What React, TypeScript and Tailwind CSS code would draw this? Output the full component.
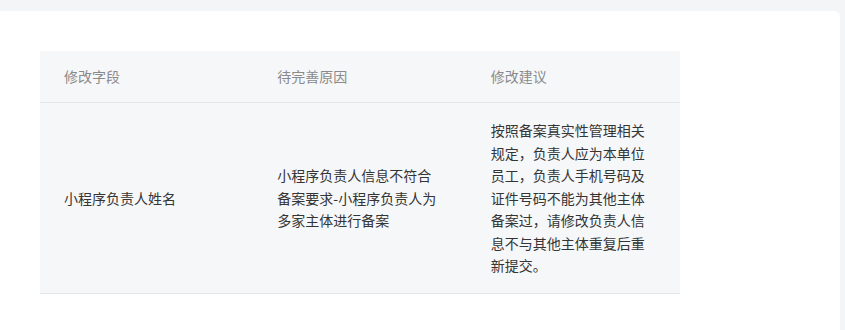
export default function App() {
  const rows = [
    {
      field: "小程序负责人姓名",
      reason: "小程序负责人信息不符合备案要求-小程序负责人为多家主体进行备案",
      advice:
        "按照备案真实性管理相关规定，负责人应为本单位员工，负责人手机号码及证件号码不能为其他主体备案过，请修改负责人信息不与其他主体重复后重新提交。",
    },
  ];

  return (
    <div
      className="min-h-[330px] w-[845px] bg-[#f4f5f7] pt-[11px] pr-[5px]"
      style={{ fontFamily: '"Noto Sans CJK SC", "Noto Sans", sans-serif' }}
    >
      <div className="min-h-[319px] rounded-tr-md bg-white pl-10 pt-10">
        <div className="w-[640px] bg-[#f6f7f9] text-[14px]">
          <div className="grid h-[52px] grid-cols-3 items-center border-b border-[#e4e5e7] text-[#8a8a8a]">
            <div className="px-6">修改字段</div>
            <div className="px-6">待完善原因</div>
            <div className="px-6">修改建议</div>
          </div>
          {rows.map((r) => (
            <div
              key={r.field}
              className="grid grid-cols-3 items-center border-b border-[#e4e5e7] py-4 leading-[22.5px] text-[#353535]"
            >
              <div className="px-6">{r.field}</div>
              <div className="px-6">{r.reason}</div>
              <div className="px-6">{r.advice}</div>
            </div>
          ))}
        </div>
      </div>
    </div>
  );
}
